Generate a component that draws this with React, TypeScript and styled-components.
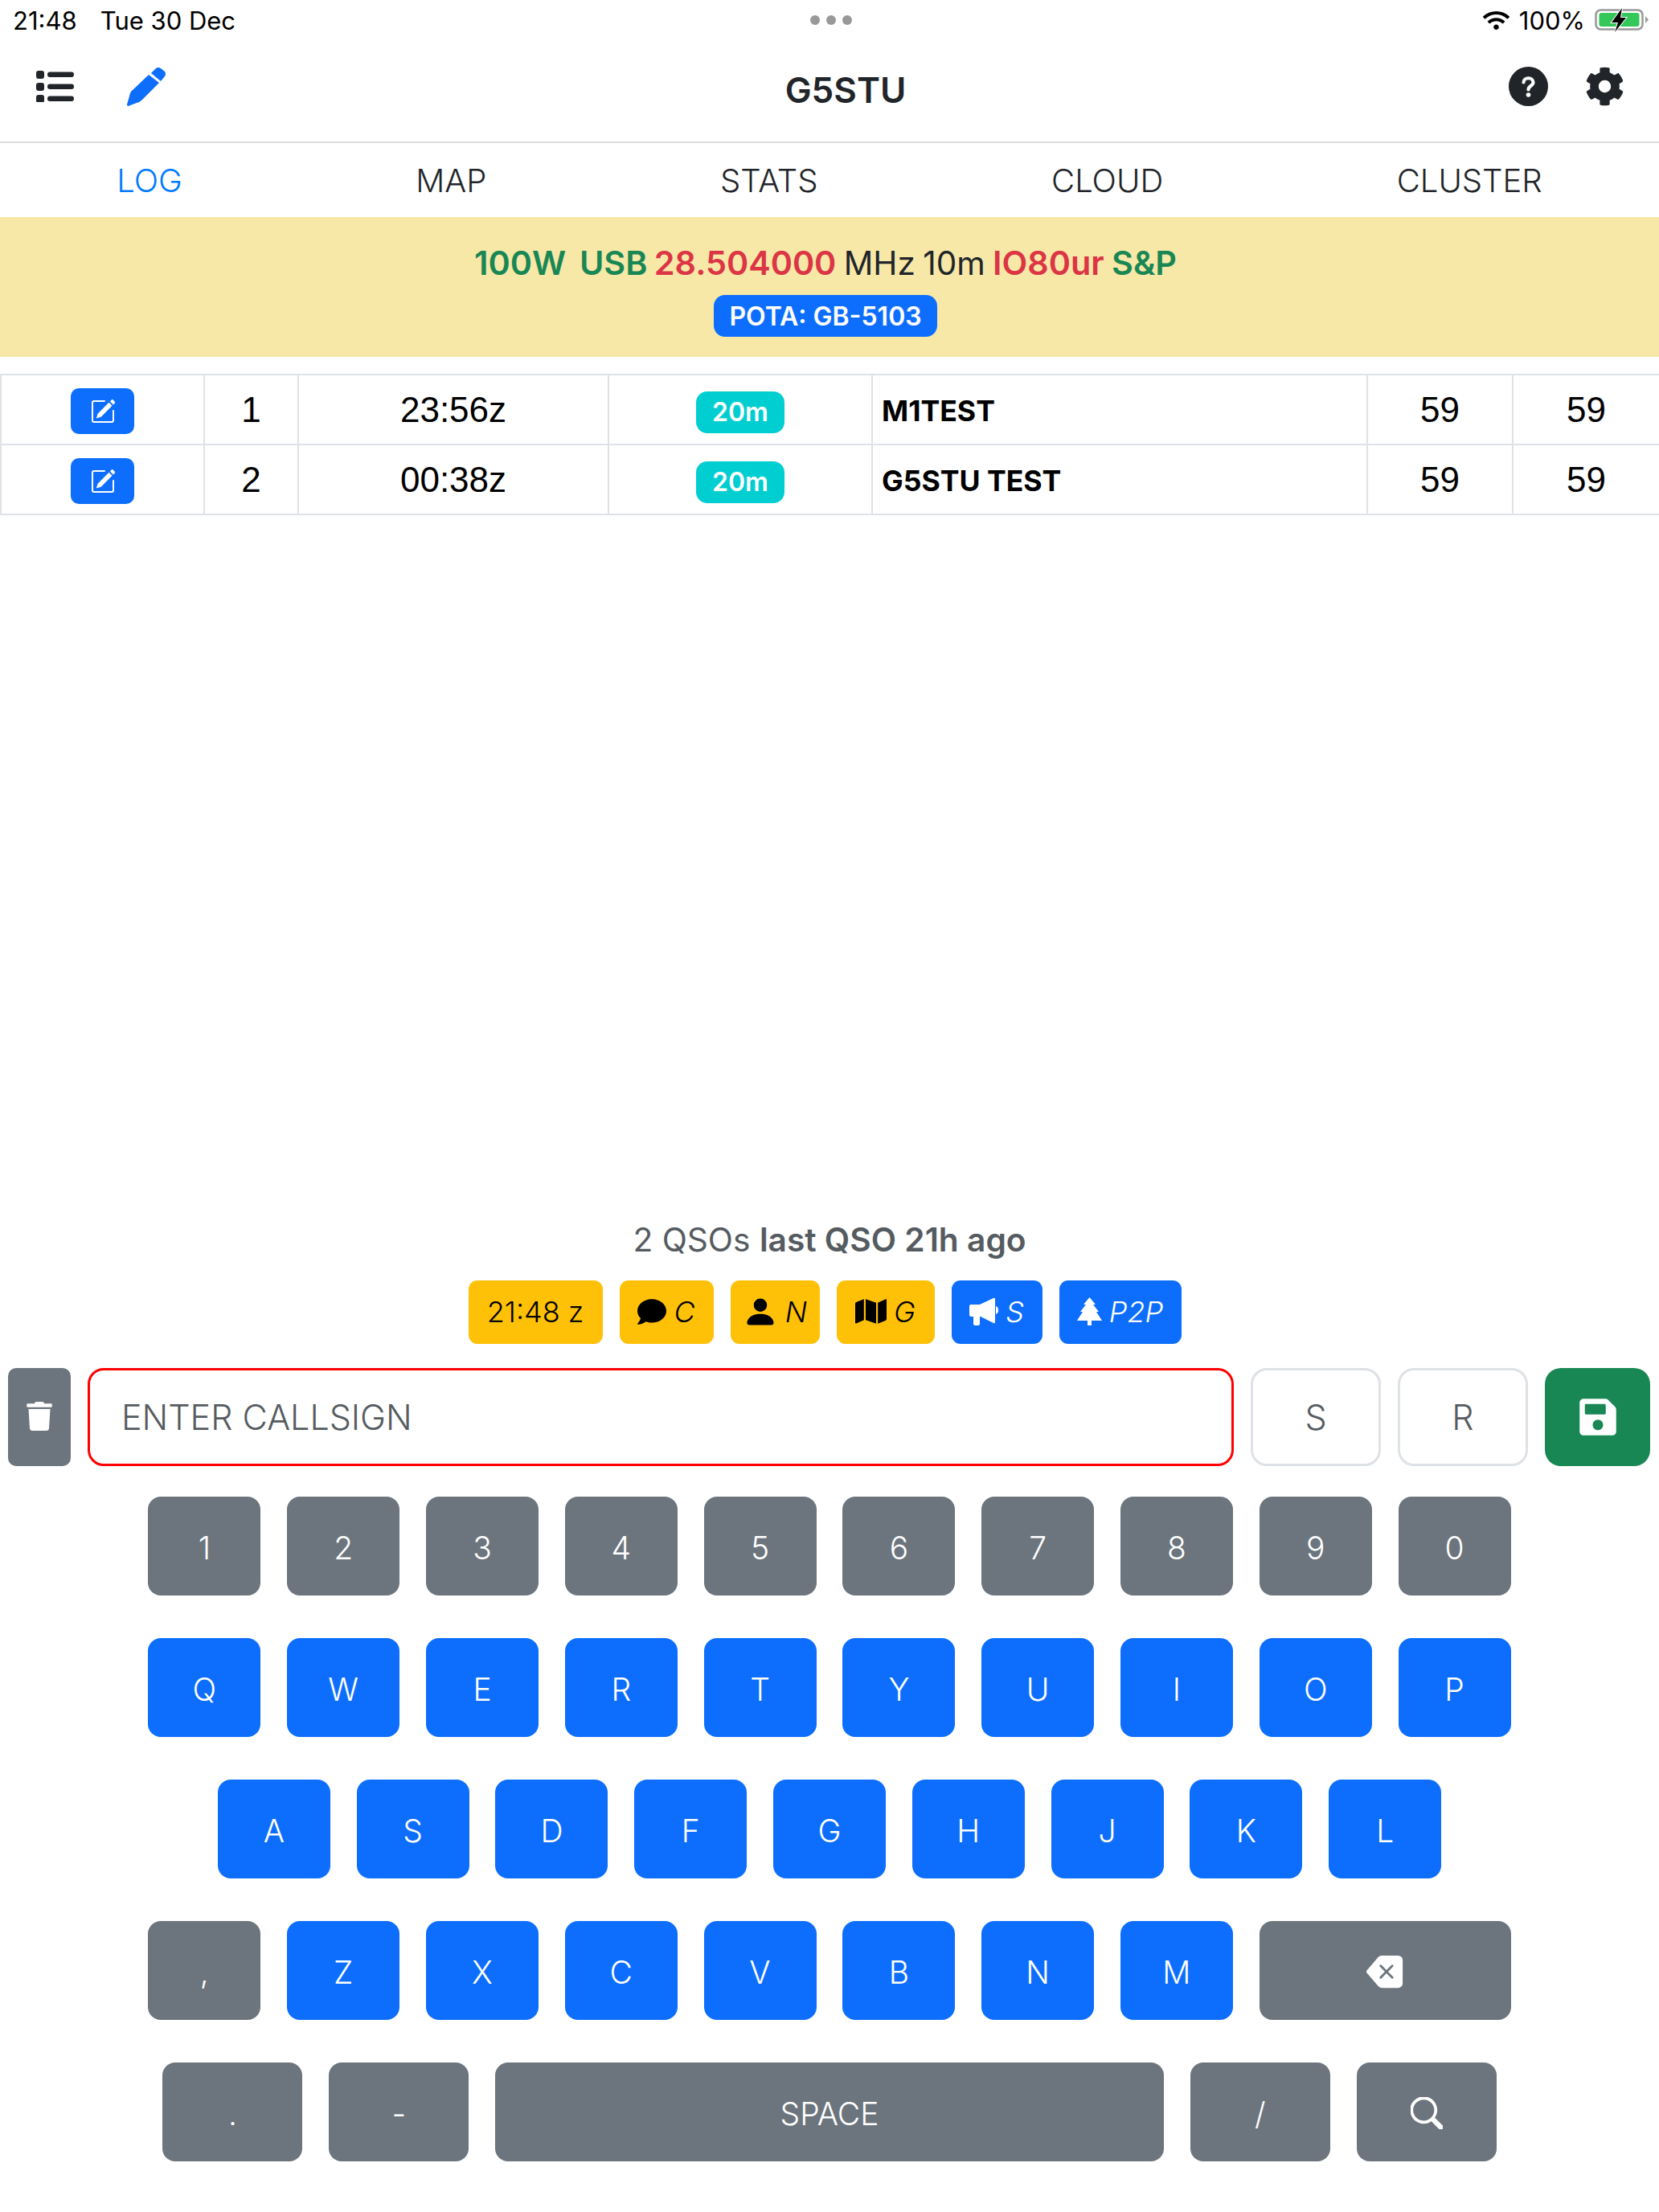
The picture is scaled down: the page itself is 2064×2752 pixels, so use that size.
import React from "react";
import styled, { createGlobalStyle } from "styled-components";
import { FaCog, FaComment, FaMap, FaTrash, FaSave, FaWifi } from "react-icons/fa";
import { BsPencilSquare, BsSearch, BsBackspaceFill, BsPersonFill } from "react-icons/bs";

const Global = createGlobalStyle`
  html, body { margin: 0; padding: 0; background: #fff; }
  * { box-sizing: border-box; }
`;
const Page = styled.div`
  width: 2064px; height: 2752px; display: flex; flex-direction: column;
  font-family: Inter, "Liberation Sans", sans-serif; color: #212529; background: #fff; overflow: hidden;
`;
const StatusBar = styled.div`
  height: 50px; display: grid; grid-template-columns: 1fr auto 1fr; align-items: center;
  padding: 0 12px 0 16px; font-size: 31px; color: #000;
`;
const StatusLeft = styled.div`display: flex; gap: 29px;`;
const StatusRight = styled.div`display: flex; justify-content: flex-end; align-items: center; gap: 12px;`;
const Dots = styled.div`display: flex; gap: 8px;`;
const Dot = styled.span`width: 12px; height: 12px; border-radius: 50%; background: #999;`;
const Header = styled.header`
  height: 128px; display: flex; align-items: center; justify-content: space-between;
  padding: 0 43px 12px 45px; border-bottom: 2px solid #ddd;
`;
const IconGroup = styled.div`display: flex; align-items: center; gap: ${p => p.$gap}px;`;
const Title = styled.h1`margin: 0 0 -10px 20px; font-size: 44px; font-weight: 600; line-height: 1;`;
const Tabs = styled.nav`height: 92px; display: flex; align-items: center;`;
const Tab = styled.div`
  flex: 1 1 auto; text-align: center; font-size: 40px; font-weight: 300;
  color: ${p => (p.$active ? "#007bff" : "#212529")};
`;
const Banner = styled.section`
  height: 174px; background: #f7e8a8; display: flex; flex-direction: column; align-items: center; padding: 34px 10px 0 0;
`;
const BannerLine = styled.div`font-size: 40.5px; line-height: 46px; font-weight: 400; white-space: pre; color: #212529; word-spacing: -2px;`;
const Strong = styled.b`font-weight: 600; font-size: 41.3px; color: ${p => p.$c};`;
const Pill = styled.span`
  margin-top: 16px; height: 52px; width: 278px; border-radius: 14px; background: #0d6efd; color: #fff;
  font-size: 32px; font-weight: 600; display: flex; align-items: center; justify-content: center;
`;
const Table = styled.table`
  margin-top: 21px; width: 2064px; table-layout: fixed; border-collapse: collapse; flex: none;
`;
const Td = styled.td`
  width: ${p => p.$w}px; height: 87px; padding: 0 ${p => (p.$left ? 11 : 0)}px; border: 2px solid #dee2e6;
  text-align: ${p => (p.$left ? "left" : "center")}; font-family: "Liberation Sans", sans-serif; font-size: 44px; color: #000;
  ${p => p.$bold && `font-family: Inter, sans-serif; font-weight: 700; font-size: 35.6px; padding-top: 3px;`}
`;
const EditBtn = styled.span`
  display: inline-flex; width: 79px; height: 57px; margin-top: 4px; align-items: center; justify-content: center;
  background: #0d6efd; color: #fff; border-radius: 10px; font-size: 32px; vertical-align: middle;
`;
const Badge = styled.span`
  display: inline-flex; width: 110px; height: 52px; margin-top: 6px; align-items: center; justify-content: center;
  background: #00ced1; color: #fff; border-radius: 14px; font: 600 32px Inter, sans-serif; vertical-align: middle;
`;
const Spacer = styled.div`flex: 1;`;
const Summary = styled.div`
  text-align: center; color: #555b60; font-size: 40.7px; line-height: 50px; font-weight: 400; margin-bottom: 25px;
`;
const SummaryBold = styled.b`font-weight: 600;`;
const QuickRow = styled.div`display: flex; justify-content: center; gap: 21px; margin-bottom: 30px; padding-right: 12px;`;
const Quick = styled.span`
  width: ${p => p.$w}px; height: 79px; display: flex; align-items: center; justify-content: center; gap: 9px;
  padding-bottom: 2px; border-radius: 11px; font-size: 36px; font-weight: 300;
  background: ${p => (p.$blue ? "#0d6efd" : "#ffc107")}; color: ${p => (p.$blue ? "#fff" : "#000")};
`;
const Em = styled.i`font-style: italic;`;
const InputRow = styled.div`display: flex; align-items: stretch; height: 122px; padding: 0 11px 0 10px; gap: 21px;`;
const Trash = styled.span`
  width: 78px; background: #6c757d; color: #fff; border-radius: 10px; display: flex; align-items: center; justify-content: center; padding-bottom: 3px; font-size: 36px;
`;
const CallInput = styled.div`
  flex: 1; border: 3px solid #f00; border-radius: 20px; display: flex; align-items: center; padding-left: 39px;
  font-size: 43px; font-weight: 300; color: #565c61;
`;
const SmallInput = styled.div`
  width: 162px; border: 3px solid #dee2e6; border-radius: 20px; display: flex; align-items: center; justify-content: center;
  font-size: 43px; font-weight: 300; color: #565c61;
`;
const SaveBtn = styled.span`
  width: 131px; background: #198754; color: #fff; border-radius: 20px; display: flex; align-items: center; justify-content: center; font-size: 52px;
`;
const Keyboard = styled.div`display: flex; flex-direction: column; gap: 53px; margin-top: 38px; padding-bottom: 63px;`;
const KeyRow = styled.div`display: flex; justify-content: center; gap: 32.8px; height: 123px;`;
const Key = styled.span`
  width: ${p => p.$w || 140}px; border-radius: 16px; display: flex; align-items: center; justify-content: center; padding-top: 3px;
  font-size: 39px; font-weight: 300; color: #fff;
  background: ${p => (p.$blue ? "#0d6efd" : "#6c757d")};
`;

const ListIcon = () => (
  <svg width="47" height="39" viewBox="0 0 47 39" fill="currentColor">
    <rect x="0" y="0" width="10" height="10" rx="3" />
    <rect x="0" y="15" width="10" height="10" rx="3" />
    <rect x="0" y="30" width="10" height="10" rx="3" />
    <rect x="14" y="1.5" width="33" height="6.5" rx="3.2" />
    <rect x="14" y="16.5" width="33" height="6.5" rx="3.2" />
    <rect x="14" y="31.5" width="33" height="6.5" rx="3.2" />
  </svg>
);
const PenIcon = () => (
  <svg width="49" height="49" viewBox="0 0 49 49" fill="#0d6efd">
    <path d="M27 10 L40 20 L19 41 Q16 44 12 45 L1.5 49 Q0 49 0 47 L4 33 Q5 30 7 29 Z" />
    <path d="M30 8 L36 2 Q39 0 42 2 L47 6 Q49 9 47 12 L42 18 Z" />
  </svg>
);
const HelpIcon = () => (
  <svg width="49" height="49" viewBox="0 0 49 49">
    <circle cx="24.5" cy="24.5" r="24.5" fill="#212529" />
    <path d="M18.5 19.5 C18.5 12.5 30.5 12.5 30.5 19.5 C30.5 24 24.5 23.5 24.5 28.5" fill="none" stroke="#fff" strokeWidth="4.2" strokeLinecap="round" />
    <circle cx="24.5" cy="35" r="2.8" fill="#fff" />
  </svg>
);
const HornIcon = () => (
  <svg width="36" height="35" viewBox="0 0 36 35" fill="#fff">
    <path d="M0 11 Q0 9 2 9 H13 L30 1 Q32 0 32 2 V31 Q32 33 30 32 L14 24 H13 V33 Q13 35 11 35 H7 Q5 35 5 33 V24 H2 Q0 24 0 22 Z" />
    <path d="M33 11 Q36 12 36 16 Q36 20 33 21 Z" />
  </svg>
);
const TreeIcon = () => (
  <svg width="31" height="35" viewBox="0 0 31 35" fill="#fff">
    <path d="M15.5 0 L23 9 H20 L27 18 H24 L31 29 H18 V35 H13 V29 H0 L7 18 H4 L11 9 H8 Z" />
  </svg>
);
const Battery = () => (
  <svg width="68" height="30" viewBox="0 0 68 30">
    <rect x="1.5" y="2.5" width="58" height="24" rx="6" fill="none" stroke="#999" strokeWidth="2.5" />
    <rect x="5.5" y="6" width="50" height="17" rx="3" fill="#34c759" />
    <path d="M63 10 L67 14.5 L63 19 Z" fill="#999" />
    <path d="M34 0 L21 18 L29 18 L25 30 L39 12 L32 12 Z" fill="#000" stroke="#fff" strokeWidth="2" paintOrder="stroke" />
  </svg>
);

const rows = [["1", "23:56z", "M1TEST"], ["2", "00:38z", "G5STU TEST"]];

export default function App() {
  return (
    <Page>
      <Global />
      <StatusBar>
        <StatusLeft><span>21:48</span><span>Tue 30 Dec</span></StatusLeft>
        <Dots><Dot /><Dot /><Dot /></Dots>
        <StatusRight><FaWifi size={33} /><span>100%</span><Battery /></StatusRight>
      </StatusBar>
      <Header>
        <IconGroup $gap={66}><ListIcon /><PenIcon /></IconGroup>
        <Title>G5STU</Title>
        <IconGroup $gap={46}><HelpIcon /><FaCog size={49} /></IconGroup>
      </Header>
      <Tabs>
        <Tab $active>LOG</Tab><Tab>MAP</Tab><Tab>STATS</Tab><Tab>CLOUD</Tab><Tab>CLUSTER</Tab>
      </Tabs>
      <Banner>
        <BannerLine>
          <Strong $c="#198754">100W  USB </Strong><Strong $c="#dc3545">28.504000</Strong> MHz 10m <Strong $c="#dc3545">IO80ur</Strong> <Strong $c="#198754">S&amp;P</Strong>
        </BannerLine>
        <Pill>POTA: GB-5103</Pill>
      </Banner>
      <Table>
        <tbody>
          {rows.map(r => (
            <tr key={r[0]}>
              <Td $w={253}><EditBtn><BsPencilSquare /></EditBtn></Td>
              <Td $w={117}>{r[0]}</Td>
              <Td $w={386}>{r[1]}</Td>
              <Td $w={328}><Badge>20m</Badge></Td>
              <Td $w={616} $left $bold>{r[2]}</Td>
              <Td $w={181}>59</Td>
              <Td $w={183}>59</Td>
            </tr>
          ))}
        </tbody>
      </Table>
      <Spacer />
      <Summary>2 QSOs <SummaryBold>last QSO 21h ago</SummaryBold></Summary>
      <QuickRow>
        <Quick $w={167}>21:48 z</Quick>
        <Quick $w={117}><FaComment size={36} /><Em>C</Em></Quick>
        <Quick $w={111}><BsPersonFill size={44} /><Em>N</Em></Quick>
        <Quick $w={122}><FaMap size={39} /><Em>G</Em></Quick>
        <Quick $w={113} $blue><HornIcon /><Em>S</Em></Quick>
        <Quick $w={152} $blue><TreeIcon /><Em>P2P</Em></Quick>
      </QuickRow>
      <InputRow>
        <Trash><FaTrash /></Trash>
        <CallInput>ENTER CALLSIGN</CallInput>
        <SmallInput>S</SmallInput>
        <SmallInput>R</SmallInput>
        <SaveBtn><FaSave /></SaveBtn>
      </InputRow>
      <Keyboard>
        <KeyRow>{"1234567890".split("").map(k => <Key key={k}>{k}</Key>)}</KeyRow>
        <KeyRow>{"QWERTYUIOP".split("").map(k => <Key key={k} $blue>{k}</Key>)}</KeyRow>
        <KeyRow>{"ASDFGHJKL".split("").map(k => <Key key={k} $blue>{k}</Key>)}</KeyRow>
        <KeyRow>
          <Key>,</Key>
          {"ZXCVBNM".split("").map(k => <Key key={k} $blue>{k}</Key>)}
          <Key $w={313}><BsBackspaceFill size={46} /></Key>
        </KeyRow>
        <KeyRow>
          <Key $w={174}>.</Key>
          <Key $w={174}>-</Key>
          <Key $w={832}>SPACE</Key>
          <Key $w={174}>/</Key>
          <Key $w={174}><BsSearch size={40} strokeWidth={0.5} stroke="#fff" /></Key>
        </KeyRow>
      </Keyboard>
    </Page>
  );
}
